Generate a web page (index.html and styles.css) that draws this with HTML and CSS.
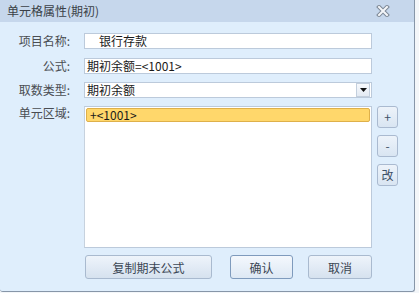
FILE: index.html
```html
<!DOCTYPE html>
<html>
<head>
<meta charset="utf-8">
<link rel="stylesheet" href="styles.css">
</head>
<body>
<div class="window">
  <div class="titlebar">
    <span class="title">单元格属性(期初)</span>
    <svg class="close" width="14" height="12" viewBox="0 0 14 12">
      <path d="M3 2 L11 10 M11 2 L3 10" stroke="#7d8896" stroke-width="4" stroke-linecap="square"/>
      <path d="M3 2 L11 10 M11 2 L3 10" stroke="#f4f6f9" stroke-width="2" stroke-linecap="square"/>
    </svg>
  </div>
  <div class="content">
    <div class="row r1">
      <span class="label">项目名称:</span>
      <div class="field"><span class="indent">银行存款</span></div>
    </div>
    <div class="row r2">
      <span class="label">公式:</span>
      <div class="field">期初余额=&lt;1001&gt;</div>
    </div>
    <div class="row r3">
      <span class="label">取数类型:</span>
      <div class="field select">
        <span class="sel-text">期初余额</span>
        <span class="drop"><svg width="7" height="4" viewBox="0 0 7 4"><path d="M0 0 H7 L3.5 4 Z" fill="#111"/></svg></span>
      </div>
    </div>
    <div class="row r4">
      <span class="label">单元区域:</span>
      <div class="listbox">
        <div class="item">+&lt;1001&gt;</div>
      </div>
      <div class="side">
        <button class="sbtn">+</button>
        <button class="sbtn">-</button>
        <button class="sbtn">改</button>
      </div>
    </div>
    <div class="buttons">
      <button class="btn b-copy">复制期末公式</button>
      <button class="btn b-ok">确认</button>
      <button class="btn b-cancel">取消</button>
    </div>
  </div>
</div>
</body>
</html>
```

FILE: styles.css
```css
html, body {
  margin: 0;
  padding: 0;
  background: #f3f6f9;
}
body {
  font-family: "Noto Sans CJK SC", "Liberation Sans", sans-serif;
  font-size: 12px;
  color: #222;
}
.window {
  width: 415px;
  height: 292px;
  box-sizing: border-box;
  background: #dfeefc;
  border-right: 1px solid #8796a8;
  border-bottom: 1px solid #8796a8;
  border-bottom-right-radius: 3px;
  border-bottom-left-radius: 3px;
  overflow: hidden;
}
.titlebar {
  height: 22px;
  background: #c6d7ec;
  display: flex;
  align-items: center;
  justify-content: space-between;
  padding: 0 24px 0 7px;
}
.title {
  font-size: 12px;
  color: #3a3f46;
  line-height: 22px;
}
.close {
  display: block;
}
.content {
  padding-top: 11px;
}
.row {
  display: flex;
  align-items: center;
}
.r2 { margin-top: 9px; }
.r3 { margin-top: 8px; }
.r4 { margin-top: 8px; align-items: flex-start; }
.label {
  width: 70px;
  padding-right: 14px;
  text-align: right;
  color: #4a4d52;
  font-size: 12px;
  line-height: 14px;
}
.field {
  width: 288px;
  height: 16px;
  box-sizing: border-box;
  border: 1px solid #bccadb;
  background: #fff;
  font-size: 12px;
  line-height: 14px;
  padding-left: 2px;
  color: #1a1a1a;
  display: flex;
  align-items: center;
}
.indent {
  padding-left: 12px;
}
.select {
  justify-content: space-between;
  padding-right: 1px;
}
.drop {
  width: 14px;
  height: 14px;
  box-sizing: border-box;
  border: 1px solid #c3cfdd;
  background: linear-gradient(#f7f9fc, #e3eaf3);
  display: flex;
  align-items: center;
  justify-content: center;
}
.drop svg { display: block; }
.listbox {
  width: 288px;
  height: 142px;
  box-sizing: border-box;
  border: 1px solid #bccadb;
  border-left-color: #c7d2de;
  background: #fff;
  padding: 1px 1px 0 1px;
}
.item {
  height: 14px;
  box-sizing: border-box;
  background: #ffd76b;
  border: 1px solid #deb04a;
  border-radius: 2px;
  font-size: 12px;
  line-height: 12px;
  padding-left: 3px;
  color: #1a1a1a;
  width: 284px;
}
.side {
  display: flex;
  flex-direction: column;
  gap: 7px;
  margin-left: 5px;
}
.sbtn {
  width: 21px;
  height: 22px;
  box-sizing: border-box;
  border: 1px solid #aabad0;
  border-radius: 3px;
  background: linear-gradient(#edf3fa, #d9e5f2);
  font-family: "Noto Sans CJK SC", "Liberation Sans", sans-serif;
  font-size: 12px;
  color: #3d4f66;
  padding: 0;
  line-height: 18px;
}
.buttons {
  display: flex;
  margin-top: 7px;
  margin-left: 85px;
}
.btn {
  height: 24px;
  box-sizing: border-box;
  border: 1px solid #a9bacf;
  border-radius: 3px;
  background: linear-gradient(#eef4fb, #d6e2ef);
  font-family: "Noto Sans CJK SC", "Liberation Sans", sans-serif;
  font-size: 12px;
  color: #3a4654;
  padding: 0;
}
.b-copy { width: 127px; }
.b-ok { width: 63px; margin-left: 18px; border-color: #7f9bbd; background: linear-gradient(#f4f8fd, #dde8f4); }
.b-cancel { width: 64px; margin-left: 15px; }
```
